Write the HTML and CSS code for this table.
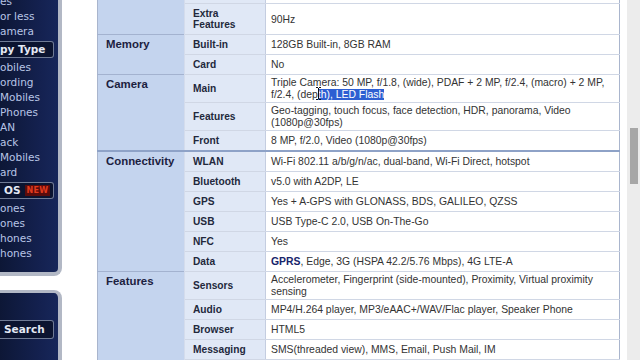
FILE: index.html
```html
<!DOCTYPE html>
<html lang="en">
<head>
<meta charset="utf-8">
<title>Specifications</title>
<link rel="stylesheet" href="styles.css">
</head>
<body>
<div class="page">
  <aside class="sidebar">
    <div class="panel panel-top">
      <ul class="links first">
        <li>es</li>
        <li>or less</li>
        <li>amera</li>
      </ul>
      <div class="head">py Type</div>
      <ul class="links">
        <li>obiles</li>
        <li>ording</li>
        <li>Mobiles</li>
        <li>Phones</li>
        <li>AN</li>
        <li>ack</li>
        <li>Mobiles</li>
        <li>ard</li>
      </ul>
      <div class="head os">OS <span class="new">NEW</span></div>
      <ul class="links">
        <li>ones</li>
        <li>ones</li>
        <li>hones</li>
        <li>hones</li>
      </ul>
    </div>
    <div class="panel panel-bottom">
      <div class="head search">Search</div>
    </div>
  </aside>

  <main class="main">
    <table class="spec">
      <colgroup>
        <col class="c-cat"><col class="c-sub"><col class="c-val">
      </colgroup>
      <tbody>
        <tr class="stub">
          <td class="cat" rowspan="2"></td>
          <td class="sub"></td>
          <td class="val"></td>
        </tr>
        <tr class="tall">
          <td class="sub">Extra<br>Features</td>
          <td class="val">90Hz</td>
        </tr>

        <tr class="group">
          <td class="cat" rowspan="2">Memory</td>
          <td class="sub">Built-in</td>
          <td class="val">128GB Built-in, 8GB RAM</td>
        </tr>
        <tr>
          <td class="sub">Card</td>
          <td class="val">No</td>
        </tr>

        <tr class="group">
          <td class="cat" rowspan="3">Camera</td>
          <td class="sub">Main</td>
          <td class="val">Triple Camera: 50 MP, f/1.8, (wide), PDAF + 2 MP, f/2.4, (macro) + 2 MP, f/2.4, (dep<span class="sel"><span class="caret"><svg width="7" height="13" viewBox="0 0 7 13"><path d="M1 0.5h2M4 0.5h2M3.5 1v11M1 12.5h2M4 12.5h2" stroke="#111" stroke-width="1" fill="none"/></svg></span>th), LED Flash</span></td>
        </tr>
        <tr>
          <td class="sub">Features</td>
          <td class="val">Geo-tagging, touch focus, face detection, HDR, panorama, Video (1080p@30fps)</td>
        </tr>
        <tr>
          <td class="sub">Front</td>
          <td class="val">8 MP, f/2.0, Video (1080p@30fps)</td>
        </tr>

        <tr class="group strong">
          <td class="cat" rowspan="6">Connectivity</td>
          <td class="sub">WLAN</td>
          <td class="val">Wi-Fi 802.11 a/b/g/n/ac, dual-band, Wi-Fi Direct, hotspot</td>
        </tr>
        <tr>
          <td class="sub">Bluetooth</td>
          <td class="val">v5.0 with A2DP, LE</td>
        </tr>
        <tr>
          <td class="sub">GPS</td>
          <td class="val">Yes + A-GPS with GLONASS, BDS, GALILEO, QZSS</td>
        </tr>
        <tr>
          <td class="sub">USB</td>
          <td class="val">USB Type-C 2.0, USB On-The-Go</td>
        </tr>
        <tr>
          <td class="sub">NFC</td>
          <td class="val">Yes</td>
        </tr>
        <tr>
          <td class="sub">Data</td>
          <td class="val"><a class="link">GPRS</a>, Edge, 3G (HSPA 42.2/5.76 Mbps), 4G LTE-A</td>
        </tr>

        <tr class="group">
          <td class="cat" rowspan="5">Features</td>
          <td class="sub">Sensors</td>
          <td class="val">Accelerometer, Fingerprint (side-mounted), Proximity, Virtual proximity sensing</td>
        </tr>
        <tr>
          <td class="sub">Audio</td>
          <td class="val">MP4/H.264 player, MP3/eAAC+/WAV/Flac player, Speaker Phone</td>
        </tr>
        <tr>
          <td class="sub">Browser</td>
          <td class="val">HTML5</td>
        </tr>
        <tr>
          <td class="sub">Messaging</td>
          <td class="val">SMS(threaded view), MMS, Email, Push Mail, IM</td>
        </tr>
        <tr class="stub">
          <td class="sub"></td>
          <td class="val"></td>
        </tr>
      </tbody>
    </table>
  </main>

  <div class="scrollbar"><div class="thumb"></div></div>
</div>
</body>
</html>
```

FILE: styles.css
```css
html, body {
  margin: 0;
  padding: 0;
  background: #ffffff;
}

body {
  font-family: "Liberation Sans", Arial, sans-serif;
}

.page {
  display: flex;
  height: 360px;
  overflow: hidden;
}

/* ---------- Sidebar ---------- */
.sidebar {
  width: 62px;
  flex: none;
  display: flex;
  flex-direction: column;
  gap: 14px;
}

.panel {
  background: linear-gradient(90deg, #0d1736 0%, #142150 70%, #17275a 100%);
  border-right: 4px solid #b2b8c5;
  font-family: "DejaVu Sans", Verdana, sans-serif;
  font-size: 10.5px;
  color: #b8c5e6;
  overflow: hidden;
}

.panel-top {
  border-bottom: 4px solid #b2b8c5;
  border-bottom-right-radius: 8px;
  padding-bottom: 11px;
}

.panel-bottom {
  flex: 1;
  border-top: 3px solid #b2b8c5;
  border-top-right-radius: 8px;
  padding-top: 25px;
}

.links {
  list-style: none;
  margin: 0;
  padding: 0;
}

.links li {
  line-height: 15px;
  height: 15px;
  white-space: nowrap;
  padding-left: 0;
}

.links.first {
  margin-top: -6px;
}

.head {
  height: 15px;
  line-height: 15px;
  margin: 2px 4px 2px 0;
  border: 1px solid #6f7b95;
  border-left: none;
  border-radius: 0 3px 3px 0;
  background: #0b1430;
  color: #e4e9f4;
  font-weight: bold;
  white-space: nowrap;
  display: flex;
  align-items: center;
}

.head.os {
  padding-left: 4px;
  gap: 4px;
}

.new {
  display: inline-block;
  height: 11px;
  line-height: 11px;
  padding: 0 2px;
  background: #5a0c0c;
  color: #e23b1e;
  font-size: 8px;
  font-weight: bold;
  letter-spacing: 0.3px;
}

.head.search {
  height: 17px;
  padding-left: 4px;
}

/* ---------- Spec table ---------- */
.main {
  margin-left: 35px;
  flex: none;
}

.spec {
  width: 522px;
  table-layout: fixed;
  border-collapse: collapse;
  border-left: 1px solid #a9b5cd;
  border-right: 1px solid #a9b5cd;
}

.c-cat { width: 87px; }
.c-sub { width: 81px; }
.c-val { width: 354px; }

.spec td {
  padding: 2px 5px 2px 8px;
  height: 15px;
  line-height: 11.5px;
  border-bottom: 1px solid #d0d7e5;
  vertical-align: middle;
}

.spec td.cat {
  background: #c4d4ee;
  color: #1c2140;
  font-weight: bold;
  font-size: 11.4px;
  vertical-align: top;
  padding-top: 4px;
  border-right: 1px solid #d4dcec;
  border-bottom: none;
}

.spec td.sub {
  background: #e0e8f6;
  color: #23283c;
  font-weight: bold;
  font-size: 10.2px;
  border-right: 1px solid #c4cde0;
}

.spec td.val {
  background: #ffffff;
  color: #333333;
  font-size: 10.4px;
  padding-left: 5px;
}

.spec tr.stub td {
  height: 3px;
  padding: 0;
}

.spec tr.tall td {
  height: 26px;
  line-height: 11px;
}

.spec tr.group td {
  border-top: 1px solid #a3b2cf;
}

.spec tr.strong td {
  border-top: 2px solid #8ea2c7;
}

.link {
  color: #17246a;
  font-weight: bold;
}

.sel {
  position: relative;
  background: #2d5fd2;
  color: #ffffff;
}

.caret {
  position: absolute;
  left: -3px;
  top: -2px;
  width: 7px;
  height: 13px;
  line-height: 0;
}

/* ---------- Scrollbar ---------- */
.scrollbar {
  margin-left: auto;
  width: 13px;
  flex: none;
  background: #ececec;
  padding: 128px 2px 0 3px;
  box-sizing: border-box;
}

.thumb {
  height: 56px;
  background: #a7a7a7;
}
```
